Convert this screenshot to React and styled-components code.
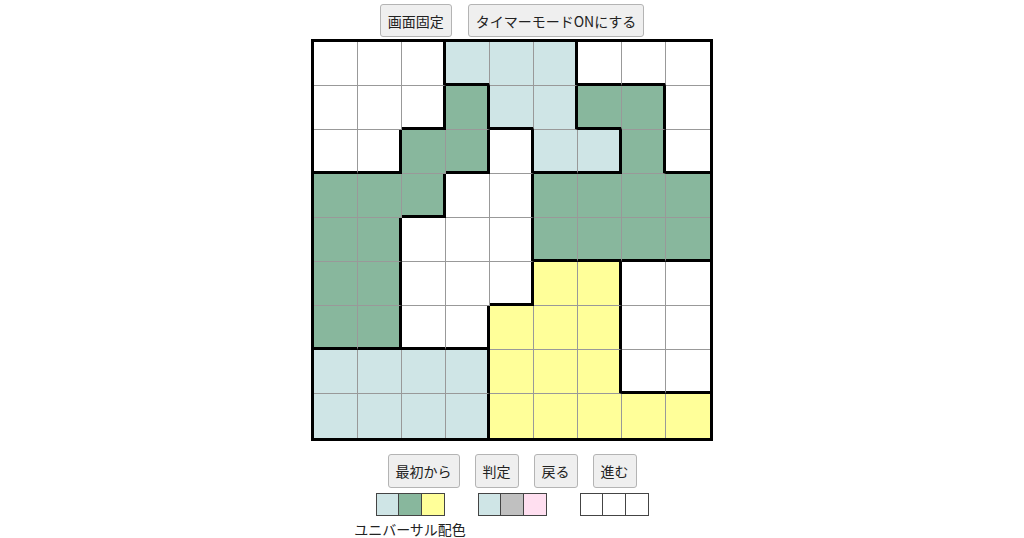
import React from 'react'
import styled, { createGlobalStyle } from 'styled-components'

const GlobalStyle = createGlobalStyle`
  body {
    margin: 0;
    background: #fff;
    font-family: "Noto Sans CJK JP", "Noto Sans", sans-serif;
    color: #222;
  }
`

// region id per cell, and colour per region
const regions = [
  [0, 0, 0, 1, 1, 1, 3, 3, 3],
  [0, 0, 0, 2, 1, 1, 4, 4, 3],
  [0, 0, 2, 2, 5, 1, 1, 4, 3],
  [2, 2, 2, 5, 5, 4, 4, 4, 4],
  [2, 2, 5, 5, 5, 4, 4, 4, 4],
  [2, 2, 5, 5, 5, 6, 6, 7, 7],
  [2, 2, 5, 5, 6, 6, 6, 7, 7],
  [8, 8, 8, 8, 6, 6, 6, 7, 7],
  [8, 8, 8, 8, 6, 6, 6, 6, 6],
]

const fills = {
  0: '#ffffff',
  1: '#cfe5e6',
  2: '#88b79d',
  3: '#ffffff',
  4: '#88b79d',
  5: '#ffffff',
  6: '#ffff99',
  7: '#ffffff',
  8: '#cfe5e6',
}

const palettes = [
  { colors: ['#cfe5e6', '#88b79d', '#ffff99'], label: 'ユニバーサル配色' },
  { colors: ['#cfe5e6', '#c0c0c0', '#ffdff0'] },
  { colors: ['#ffffff', '#ffffff', '#ffffff'] },
]

export default function App() {
  return (
    <>
      <GlobalStyle />
      <Page>
        <ButtonRow>
          <Button>画面固定</Button>
          <Button>タイマーモードONにする</Button>
        </ButtonRow>
        <Board>
          {regions.map((row, r) =>
            row.map((id, c) => (
              <Cell
                key={r + '-' + c}
                $fill={fills[id]}
                $right={c < 8 ? (row[c + 1] !== id ? 'thick' : 'thin') : 'none'}
                $bottom={r < 8 ? (regions[r + 1][c] !== id ? 'thick' : 'thin') : 'none'}
              />
            ))
          )}
        </Board>
        <ControlRow>
          <Button>最初から</Button>
          <Button>判定</Button>
          <Button>戻る</Button>
          <Button>進む</Button>
        </ControlRow>
        <PaletteRow>
          {palettes.map((p, i) => (
            <PaletteCol key={i}>
              <Swatches>
                {p.colors.map((col, j) => (
                  <Swatch key={j} $color={col} />
                ))}
              </Swatches>
              {p.label && <PaletteLabel>{p.label}</PaletteLabel>}
            </PaletteCol>
          ))}
        </PaletteRow>
      </Page>
    </>
  )
}

const Page = styled.div`
  display: flex;
  flex-direction: column;
  align-items: center;
  padding-top: 4px;
`
const ButtonRow = styled.div`
  display: flex;
  justify-content: center;
  gap: 16px;
  margin-bottom: 2px;
`
const Button = styled.button`
  height: 33px;
  padding: 0 7px;
  font-family: "Noto Sans CJK JP", "Noto Sans", sans-serif;
  font-size: 14px;
  color: #222;
  background-color: #efefef;
  border: 1px solid #b4b4b4;
  border-radius: 3px;
  line-height: 1;
`
const Board = styled.div`
  display: grid;
  grid-template-columns: repeat(9, 44px);
  grid-template-rows: repeat(9, 44px);
  border: 3px solid #000;
`
const borderFor = (kind) =>
  kind === 'thick' ? '3px solid #000' : kind === 'thin' ? '1px solid #999' : 'none'

const Cell = styled.div`
  box-sizing: border-box;
  background-color: ${(p) => p.$fill};
  border-right: ${(p) => borderFor(p.$right)};
  border-bottom: ${(p) => borderFor(p.$bottom)};
`
const ControlRow = styled.div`
  display: flex;
  justify-content: center;
  gap: 15px;
  margin-top: 13px;
  button {
    height: 34px;
  }
`
const PaletteRow = styled.div`
  display: flex;
  justify-content: center;
  margin-top: 5px;
`
const PaletteCol = styled.div`
  width: 102px;
  display: flex;
  flex-direction: column;
  align-items: center;
`
const Swatches = styled.div`
  display: flex;
`
const Swatch = styled.div`
  width: 21px;
  height: 21px;
  background-color: ${(p) => p.$color};
  border: 1px solid #444;
  & + & {
    border-left: none;
    width: 22px;
  }
`
const PaletteLabel = styled.div`
  margin-top: 6px;
  font-size: 14px;
  line-height: 15px;
  white-space: nowrap;
  color: #222;
`
